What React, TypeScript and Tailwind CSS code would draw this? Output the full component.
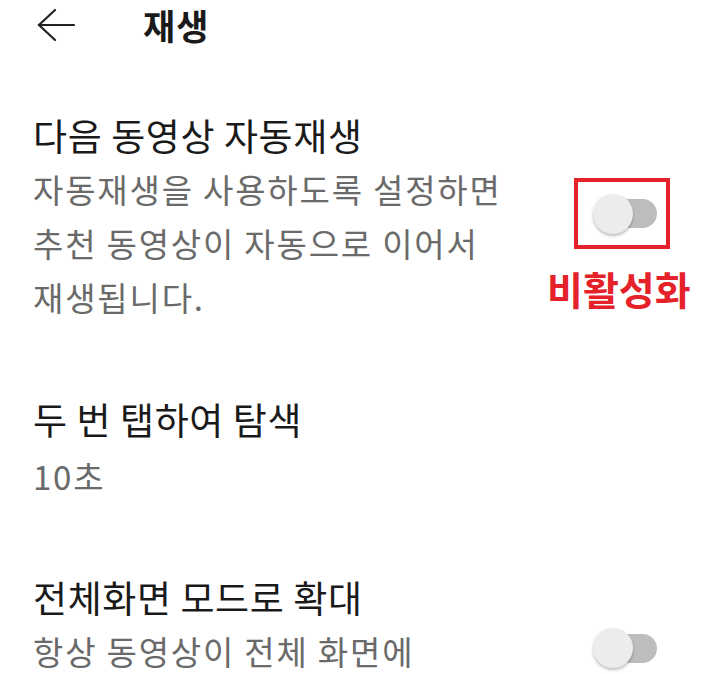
import React from "react";

const FONT = { fontFamily: '"Noto Sans CJK KR", "Noto Sans", sans-serif' };

function Toggle() {
  return (
    <div className="relative w-[64px] h-[40px] flex items-center">
      <div className="ml-[12px] w-[52px] h-[29px] rounded-full bg-[#bdbdbd]" />
      <div className="absolute left-0 top-0 w-[40px] h-[40px] rounded-full bg-[#ececec] shadow-[0_2px_3px_rgba(0,0,0,0.25)]" />
    </div>
  );
}

export default function App() {
  return (
    <div className="w-[720px] h-[674px] overflow-hidden bg-white text-[#1a1a1a]" style={FONT}>
      {/* Header */}
      <div className="h-[50px] flex items-center">
        <svg width="40" height="34" viewBox="0 0 40 34" className="ml-[37px] shrink-0">
          <path d="M18 2 L2 17 L18 32" fill="none" stroke="#222" strokeWidth="2.2" strokeLinecap="round" strokeLinejoin="miter" />
          <path d="M2 17 L37 17" fill="none" stroke="#222" strokeWidth="2.2" strokeLinecap="round" />
        </svg>
        <div className="ml-[66px] text-[35px] leading-[50px] font-bold tracking-[1px]">재생</div>
      </div>

      <div className="pt-[25px]">
        {/* Item 1 */}
        <div className="flex pt-[34px] pb-[35px]">
          <div className="flex-1 pl-[33px]">
            <div className="text-[37px] leading-[52px] tracking-[0.6px] whitespace-nowrap">다음 동영상 자동재생</div>
            <div className="mt-[1px] text-[33px] leading-[54px] tracking-[1.8px] text-[#6a6a6a] whitespace-nowrap">
              <div>자동재생을 사용하도록 설정하면</div>
              <div>추천 동영상이 자동으로 이어서</div>
              <div>재생됩니다.</div>
            </div>
          </div>
          <div className="w-[180px] flex flex-col items-start pt-[69px]">
            <div className="ml-[34px] w-[96px] h-[71px] border-[4px] border-[#e52229] flex items-center pl-[15px]">
              <Toggle />
            </div>
            <div className="ml-[7px] mt-[19px] text-[39px] leading-[40px] font-bold text-[#e52229] whitespace-nowrap">
              비활성화
            </div>
          </div>
        </div>

        {/* Item 2 */}
        <div className="flex py-[34px]">
          <div className="flex-1 pl-[33px]">
            <div className="text-[37px] leading-[52px] tracking-[0.6px] whitespace-nowrap">두 번 탭하여 탐색</div>
            <div className="mt-[4px] text-[33px] leading-[54px] tracking-[1.8px] text-[#6a6a6a] whitespace-nowrap">10초</div>
          </div>
        </div>

        {/* Item 3 */}
        <div className="flex py-[34px]">
          <div className="flex-1 pl-[33px]">
            <div className="text-[37px] leading-[52px] tracking-[0.6px] whitespace-nowrap">전체화면 모드로 확대</div>
            <div className="mt-[1px] text-[33px] leading-[54px] tracking-[1.8px] text-[#6a6a6a] whitespace-nowrap">
              <div>항상 동영상이 전체 화면에</div>
            </div>
          </div>
          <div className="w-[180px] flex flex-col items-start pt-[57px]">
            <div className="ml-[53px]">
              <Toggle />
            </div>
          </div>
        </div>
      </div>
    </div>
  );
}
